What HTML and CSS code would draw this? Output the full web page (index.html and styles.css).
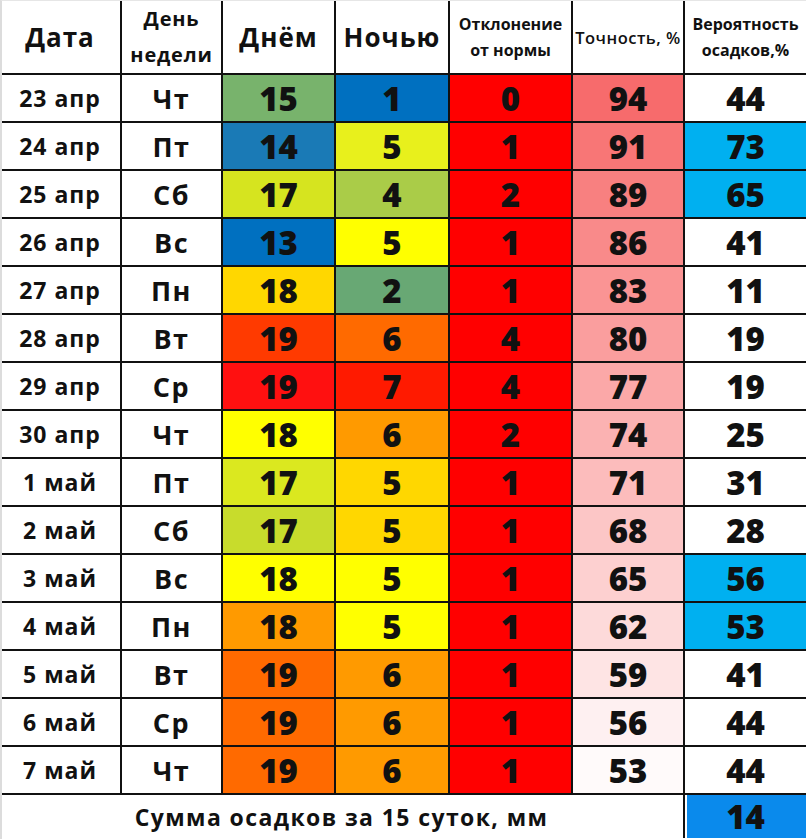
FILE: index.html
```html
<!DOCTYPE html>
<html lang="ru">
<head>
<meta charset="utf-8">
<title>Прогноз погоды</title>
<link rel="stylesheet" href="styles.css">
</head>
<body>
<div class="frame">
<table class="wt">
<colgroup>
<col class="c1"><col class="c2"><col class="c3"><col class="c4"><col class="c5"><col class="c6"><col class="c7">
</colgroup>
<thead>
<tr>
<th class="h-big">Дата</th>
<th class="h-mid">День<br>недели</th>
<th class="h-big">Днём</th>
<th class="h-big">Ночью</th>
<th class="h-sm">Отклонение<br>от нормы</th>
<th class="h-xs">Точность, %</th>
<th class="h-sm">Вероятность<br>осадков,%</th>
</tr>
</thead>
<tbody>
<tr><td class="date">23 апр</td><td class="dow">Чт</td><td class="n d-green">15</td><td class="n blue">1</td><td class="n red">0</td><td class="n a94">94</td><td class="n">44</td></tr>
<tr><td class="date">24 апр</td><td class="dow">Пт</td><td class="n d-steel">14</td><td class="n ylw2">5</td><td class="n red">1</td><td class="n a91">91</td><td class="n cyan">73</td></tr>
<tr><td class="date">25 апр</td><td class="dow">Сб</td><td class="n lime">17</td><td class="n lgreen">4</td><td class="n red">2</td><td class="n a89">89</td><td class="n cyan">65</td></tr>
<tr><td class="date">26 апр</td><td class="dow">Вс</td><td class="n blue">13</td><td class="n yellow">5</td><td class="n red">1</td><td class="n a86">86</td><td class="n">41</td></tr>
<tr><td class="date">27 апр</td><td class="dow">Пн</td><td class="n gold">18</td><td class="n green">2</td><td class="n red">1</td><td class="n a83">83</td><td class="n">11</td></tr>
<tr><td class="date">28 апр</td><td class="dow">Вт</td><td class="n vermil">19</td><td class="n orange">6</td><td class="n red">4</td><td class="n a80">80</td><td class="n">19</td></tr>
<tr><td class="date">29 апр</td><td class="dow">Ср</td><td class="n red2">19</td><td class="n red3">7</td><td class="n red">4</td><td class="n a77">77</td><td class="n">19</td></tr>
<tr><td class="date">30 апр</td><td class="dow">Чт</td><td class="n yellow">18</td><td class="n amber">6</td><td class="n red">2</td><td class="n a74">74</td><td class="n">25</td></tr>
<tr><td class="date">1 май</td><td class="dow">Пт</td><td class="n lime2">17</td><td class="n gold">5</td><td class="n red">1</td><td class="n a71">71</td><td class="n">31</td></tr>
<tr><td class="date">2 май</td><td class="dow">Сб</td><td class="n lime3">17</td><td class="n gold">5</td><td class="n red">1</td><td class="n a68">68</td><td class="n">28</td></tr>
<tr><td class="date">3 май</td><td class="dow">Вс</td><td class="n yellow">18</td><td class="n yellow">5</td><td class="n red">1</td><td class="n a65">65</td><td class="n cyan">56</td></tr>
<tr><td class="date">4 май</td><td class="dow">Пн</td><td class="n amber">18</td><td class="n yellow">5</td><td class="n red">1</td><td class="n a62">62</td><td class="n cyan">53</td></tr>
<tr><td class="date">5 май</td><td class="dow">Вт</td><td class="n orange">19</td><td class="n amber">6</td><td class="n red">1</td><td class="n a59">59</td><td class="n">41</td></tr>
<tr><td class="date">6 май</td><td class="dow">Ср</td><td class="n orange">19</td><td class="n amber">6</td><td class="n red">1</td><td class="n a56">56</td><td class="n">44</td></tr>
<tr><td class="date">7 май</td><td class="dow">Чт</td><td class="n orange">19</td><td class="n amber">6</td><td class="n red">1</td><td class="n a53">53</td><td class="n">44</td></tr>
</tbody>
<tfoot>
<tr><td class="sum-label" colspan="6">Сумма осадков за 15 суток, мм</td><td class="n sum">14</td></tr>
</tfoot>
</table>
</div>
</body>
</html>
```
FILE: styles.css
```css
html, body {
  margin: 0;
  padding: 0;
  background: #ffffff;
}
.frame {
  width: 806px;
  height: 839px;
  overflow: hidden;
  border-left: 2px solid #dcdcdc;
  border-top: 1px solid #e6e6e6;
  box-sizing: border-box;
}
.wt {
  border-collapse: collapse;
  table-layout: fixed;
  width: 806px;
  margin-left: -2px;
  font-family: "Open Sans", "DejaVu Sans", sans-serif;
  font-weight: 700;
  color: #111;
}
.c1 { width: 121px; }
.c2 { width: 101px; }
.c3 { width: 113px; }
.c4 { width: 114px; }
.c5 { width: 123px; }
.c6 { width: 112px; }
.c7 { width: 122px; }
.wt th, .wt td {
  border: 2px solid #111;
  padding: 0;
  text-align: center;
  vertical-align: middle;
  overflow: hidden;
  white-space: nowrap;
}
.wt tr > :first-child { border-left: none; }
.wt tr > :last-child { border-right: none; }
.wt thead th { border-top: none; height: 72px; }
.wt tbody td { height: 46px; }
.h-big { font-size: 26px; letter-spacing: 1px; padding-bottom: 6px; }
.h-mid { font-size: 20px; line-height: 36px; letter-spacing: 0.8px; padding-bottom: 2px; }
.h-sm { font-size: 16px; line-height: 26px; }
.h-xs { font-size: 16.5px; font-weight: 600; letter-spacing: 0.5px; padding-bottom: 2px; }
.date { font-size: 23px; letter-spacing: 1px; }
.dow { font-size: 27px; letter-spacing: 1.5px; }
.n { font-size: 33px; line-height: 1; font-weight: 800; }
.wt tfoot td { border-bottom: none; height: 43px; }
.sum-label { font-size: 23px; letter-spacing: 1.4px; border-right: 2px solid #111; }
.sum { background: #0a8aec; box-shadow: inset 2px 0 0 #fff; }

/* colours */
.red { background: #ff0000; }
.red2 { background: #ff1010; }
.red3 { background: #ff1a00; }
.vermil { background: #ff3a00; }
.orange { background: #ff6a00; }
.amber { background: #ff9a00; }
.gold { background: #ffd700; }
.yellow { background: #ffff00; }
.ylw2 { background: #e8f01c; }
.lime { background: #d6e41f; }
.lime2 { background: #dbe81f; }
.lime3 { background: #c8dc2c; }
.lgreen { background: #aacc48; }
.green { background: #68a874; }
.d-green { background: #78b36c; }
.d-steel { background: #1a7ab6; }
.blue { background: #0070c0; }
.cyan { background: #00b0f0; }
.a94 { background: #f76b6c; }
.a91 { background: #f87676; }
.a89 { background: #f88080; }
.a86 { background: #f98a8a; }
.a83 { background: #fa9494; }
.a80 { background: #fa9e9e; }
.a77 { background: #fba8a8; }
.a74 { background: #fbb2b2; }
.a71 { background: #fcbcbc; }
.a68 { background: #fcc6c6; }
.a65 { background: #fdd0d0; }
.a62 { background: #fddada; }
.a59 { background: #fee4e4; }
.a56 { background: #fef0f1; }
.a53 { background: #fffafa; }
```
